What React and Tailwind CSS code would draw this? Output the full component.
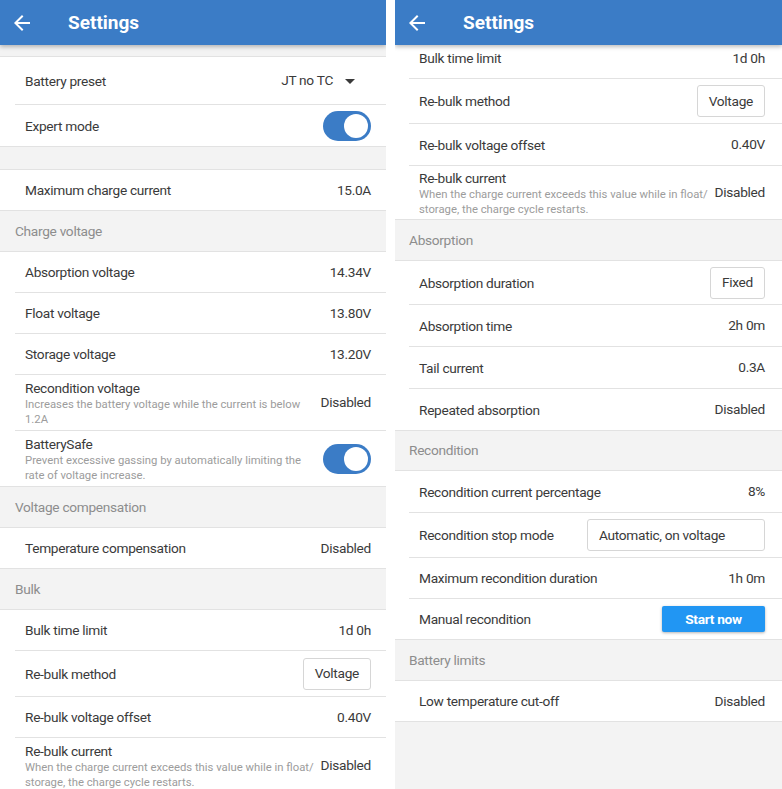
import React from "react";

const leftScreen = [
  { type: "band" },
  {
    type: "group",
    rows: [
      { label: "Battery preset", kind: "dropdown", value: "JT no TC", h: "h-[47px]" },
      { label: "Expert mode", kind: "toggle", h: "h-[41px]" },
    ],
  },
  { type: "gap" },
  {
    type: "group",
    rows: [{ label: "Maximum charge current", value: "15.0A", h: "h-[40px]" }],
  },
  { type: "header", title: "Charge voltage" },
  {
    type: "group",
    rows: [
      { label: "Absorption voltage", value: "14.34V", h: "h-[40px]" },
      { label: "Float voltage", value: "13.80V", h: "h-[40px]" },
      { label: "Storage voltage", value: "13.20V", h: "h-[40px]" },
      {
        label: "Recondition voltage",
        desc: ["Increases the battery voltage while the current is below", "1.2A"],
        value: "Disabled",
        h: "h-[55px]",
      },
      {
        label: "BatterySafe",
        desc: ["Prevent excessive gassing by automatically limiting the", "rate of voltage increase."],
        kind: "toggle",
        h: "h-[55px]",
      },
    ],
  },
  { type: "header", title: "Voltage compensation" },
  {
    type: "group",
    rows: [{ label: "Temperature compensation", value: "Disabled", h: "h-[40px]" }],
  },
  { type: "header", title: "Bulk" },
  {
    type: "group",
    rows: [
      { label: "Bulk time limit", value: "1d 0h", h: "h-[40px]" },
      { label: "Re-bulk method", kind: "select", value: "Voltage", h: "h-[45px]" },
      { label: "Re-bulk voltage offset", value: "0.40V", h: "h-[40px]" },
      {
        label: "Re-bulk current",
        desc: ["When the charge current exceeds this value while in float/", "storage, the charge cycle restarts."],
        value: "Disabled",
        h: "h-[55px]",
      },
    ],
  },
];

const rightScreen = [
  {
    type: "group",
    rows: [
      { label: "Bulk time limit", value: "1d 0h", h: "h-[40px]" },
      { label: "Re-bulk method", kind: "select", value: "Voltage", h: "h-[44px]" },
      { label: "Re-bulk voltage offset", value: "0.40V", h: "h-[41px]" },
      {
        label: "Re-bulk current",
        desc: ["When the charge current exceeds this value while in float/", "storage, the charge cycle restarts."],
        value: "Disabled",
        h: "h-[53px]",
      },
    ],
  },
  { type: "header", title: "Absorption" },
  {
    type: "group",
    rows: [
      { label: "Absorption duration", kind: "select", value: "Fixed", h: "h-[43px]" },
      { label: "Absorption time", value: "2h 0m", h: "h-[41px]" },
      { label: "Tail current", value: "0.3A", h: "h-[41px]" },
      { label: "Repeated absorption", value: "Disabled", h: "h-[41px]" },
    ],
  },
  { type: "header", title: "Recondition", short: true },
  {
    type: "group",
    rows: [
      { label: "Recondition current percentage", value: "8%", h: "h-[41px]" },
      { label: "Recondition stop mode", kind: "wideselect", value: "Automatic, on voltage", h: "h-[44px]" },
      { label: "Maximum recondition duration", value: "1h 0m", h: "h-[40px]" },
      { label: "Manual recondition", kind: "button", value: "Start now", h: "h-[40px]" },
    ],
  },
  { type: "header", title: "Battery limits" },
  {
    type: "group",
    last: true,
    rows: [{ label: "Low temperature cut-off", value: "Disabled", h: "h-[40px]" }],
  },
];

const ArrowBack = () => (
  <svg width="24" height="24" viewBox="0 0 24 24" fill="white">
    <path d="M20 11H7.83l5.59-5.59L12 4l-8 8 8 8 1.41-1.41L7.83 13H20v-2z" />
  </svg>
);

const Toggle = () => (
  <div className="flex items-center justify-end w-[48px] h-[30px] rounded-full bg-[#3b7cc6] px-[3px] shrink-0">
    <div className="w-[24px] h-[24px] rounded-full bg-white" />
  </div>
);

const RowValue = ({ row }) => {
  if (row.kind === "toggle") return <Toggle />;
  if (row.kind === "dropdown")
    return (
      <div className="flex items-center text-[13.7px] tracking-[-0.3px] text-[#3a3a3a] mr-[9px]">
        <span>{row.value}</span>
        <svg width="24" height="24" viewBox="0 0 24 24" fill="#3a3a3a" className="ml-[5px]">
          <path d="M7 10l5 5 5-5z" />
        </svg>
      </div>
    );
  if (row.kind === "select")
    return (
      <div className="h-[32px] px-[11px] flex items-center border border-[#d6d6d6] rounded-[3px] bg-white text-[13.7px] tracking-[-0.3px] text-[#3a3a3a]">
        {row.value}
      </div>
    );
  if (row.kind === "wideselect")
    return (
      <div className="h-[32px] w-[178px] px-[11px] flex items-center border border-[#d6d6d6] rounded-[3px] bg-white text-[13.7px] tracking-[-0.3px] text-[#3a3a3a]">
        {row.value}
      </div>
    );
  if (row.kind === "button")
    return (
      <div className="h-[26px] w-[103px] flex items-center justify-center rounded-[2px] bg-[#2196f3] text-white text-[13.7px] tracking-[-0.3px] font-bold shadow-[0_1px_3px_rgba(0,0,0,0.3)]">
        {row.value}
      </div>
    );
  return (
    <span className="text-[13.7px] tracking-[-0.3px] text-[#3a3a3a] whitespace-nowrap">{row.value}</span>
  );
};

const Row = ({ row, first, right }) => (
  <div className="bg-white">
    {!first && <div className={`h-px bg-[#e2e2e2] ${right ? "ml-[14px]" : "ml-[15px]"}`} />}
    <div
      className={`flex items-center justify-between gap-[8px] ${
        right ? "pl-[24px] pr-[17px]" : "pl-[25px] pr-[15px]"
      } ${row.h}`}
    >
      <div className="flex flex-col min-w-0">
        <span className="text-[13.7px] tracking-[-0.3px] text-[#3a3a3a] leading-[18px] whitespace-nowrap">
          {row.label}
        </span>
        {row.desc && (
          <div className="text-[11.3px] leading-[15px] text-[#9c9c9c] whitespace-nowrap">
            {row.desc.map((line) => (
              <div key={line}>{line}</div>
            ))}
          </div>
        )}
      </div>
      <RowValue row={row} />
    </div>
  </div>
);

const Section = ({ item, right }) => {
  if (item.type === "band")
    return <div className="h-[12px] bg-[#f3f3f3] border-b border-[#e2e2e2]" />;
  if (item.type === "gap")
    return <div className="h-[24px] bg-[#f3f3f3] border-y border-[#e2e2e2]" />;
  if (item.type === "header")
    return (
      <div
        className={`flex items-center bg-[#f3f3f3] border-y border-[#e2e2e2] text-[13.7px] tracking-[-0.3px] text-[#8d8d8d] ${
          right ? "pl-[14px]" : "pl-[15px]"
        } ${item.short ? "h-[41px]" : "h-[42px]"}`}
      >
        {item.title}
      </div>
    );
  return (
    <div className={item.last ? "border-b border-[#e2e2e2]" : ""}>
      {item.rows.map((row, i) => (
        <Row key={row.label} row={row} first={i === 0} right={right} />
      ))}
    </div>
  );
};

const Screen = ({ items, right, className }) => (
  <div className={`flex flex-col h-full bg-[#f3f3f3] overflow-hidden ${className}`}>
    <div className="relative z-10 h-[45px] shrink-0 flex items-center pt-[1px] bg-[#3b7cc6] shadow-[0_2px_4px_rgba(0,0,0,0.25)]">
      <div className="ml-[10px]">
        <ArrowBack />
      </div>
      <span className="ml-[34px] text-[19px] font-bold text-white">Settings</span>
    </div>
    <div className="flex-1 overflow-hidden">
      <div className={right ? "-mt-[7px]" : ""}>
        {items.map((item, i) => (
          <Section key={i} item={item} right={right} />
        ))}
      </div>
    </div>
  </div>
);

export default function App() {
  return (
    <div className="flex w-[782px] h-[789px] bg-white font-['Roboto','Noto_Sans',sans-serif] overflow-hidden">
      <Screen items={leftScreen} className="w-[386px]" />
      <Screen items={rightScreen} right className="w-[387px] ml-[9px]" />
    </div>
  );
}
